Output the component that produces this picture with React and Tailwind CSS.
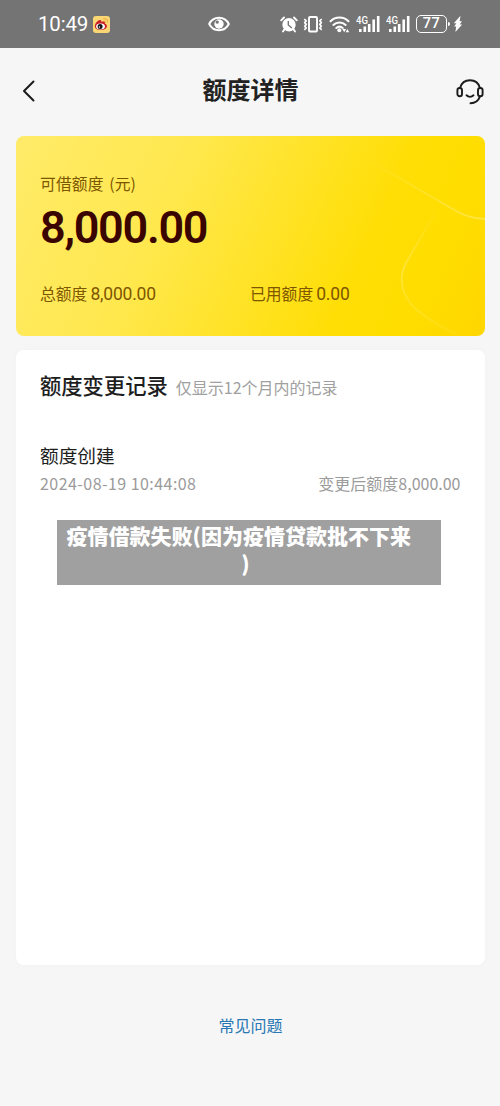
import React from "react";

const cjk = "font-['Noto_Sans_CJK_SC',sans-serif]";
const num = "font-[Roboto,'Noto_Sans_CJK_SC',sans-serif]";

function WeiboIcon() {
  return (
    <svg className="ml-[5px] mt-[1px]" width="17" height="17" viewBox="0 0 17 17">
      <rect width="17" height="17" rx="3" fill="#fbd774" />
      <path d="M10.800 2.600c2.400-.3 4 1.200 3.700 3.500M10.900 5c1-.1 1.600.4 1.500 1.300" fill="none" stroke="#f5b04a" strokeWidth="1.200" strokeLinecap="round" />
      <path d="M1.800 10.300C2 7 6.200 2.800 8 4.400c.6.600.3 1.400.3 1.400s3.300-1.200 3.600.6c.1.700-.1 1.100-.1 1.100 1.400.4 2.100 1.300 2.100 2.500 0 2.500-3 4.100-6.200 4.100s-6-1.400-5.900-3.800z" fill="#c9202a" />
      <ellipse cx="7.500" cy="10.500" rx="4.400" ry="3" fill="#fff" />
      <circle cx="7.100" cy="10.500" r="2.500" fill="#151515" />
      <circle cx="6.400" cy="11" r=".7" fill="#fff" />
    </svg>
  );
}

function EyeIcon() {
  return (
    <svg width="22" height="16" viewBox="0 0 22 16">
      <path d="M1.200 8C5.300-.2 16.700-.2 20.800 8 16.700 16.200 5.300 16.200 1.200 8z" fill="none" stroke="#fff" strokeWidth="2" />
      <circle cx="11" cy="8" r="4.700" fill="#fff" />
      <circle cx="9.200" cy="6.100" r="1.700" fill="#747474" />
    </svg>
  );
}

function AlarmIcon() {
  return (
    <svg width="18" height="17" viewBox="0 0 18 17">
      <circle cx="9" cy="8.700" r="6.700" fill="#fff" />
      <path d="M1.200 4.300 4 1.500M16.800 4.300 14 1.500" stroke="#fff" strokeWidth="1.900" strokeLinecap="round" />
      <path d="M4.300 13.500 3 15.500M13.700 13.500l1.300 2" stroke="#fff" strokeWidth="1.900" strokeLinecap="round" />
      <path d="M8.300 5v4l3.500 3" fill="none" stroke="#747474" strokeWidth="1.400" />
    </svg>
  );
}

function VibrateIcon() {
  return (
    <svg width="20" height="17" viewBox="0 0 20 17">
      <rect x="6" y="1" width="8" height="14.500" rx="1" fill="none" stroke="#fff" strokeWidth="1.900" />
      <path d="M1.300 3l1.900 1.800-1.500 1.800 1.500 1.800-1.500 1.800 1.500 1.800-1.900 1.800M18.700 3l-1.900 1.800 1.500 1.800-1.500 1.800 1.500 1.800-1.500 1.800 1.900 1.800" fill="none" stroke="#fff" strokeWidth="1.700" strokeLinejoin="round" />
    </svg>
  );
}

function WifiIcon() {
  return (
    <svg width="22" height="17" viewBox="0 0 22 17">
      <g fill="none" stroke="#fff" strokeWidth="2" strokeLinecap="round">
        <path d="M1.500 5.300c5-5 13-5 18 0" />
        <path d="M4.300 8.900c3.500-3.300 8.900-3.300 12.400 0" />
        <path d="M7.300 12c2-1.700 4.400-1.700 6.400 0" />
      </g>
      <circle cx="10.300" cy="14.300" r="2" fill="#fff" />
      <path d="M13.300 13l1.900 3.300 1.900-3.300zM16.600 16.300l1.800-3.300 1.800 3.300z" fill="#fff" />
    </svg>
  );
}

function SignalIcon() {
  return (
    <svg width="25" height="18" viewBox="0 0 25 18">
      <text x="0" y="8.500" fontSize="10" fontWeight="500" fill="#fff" fontFamily="Roboto, sans-serif" textLength="12" lengthAdjust="spacingAndGlyphs">4G</text>
      <path d="M4.300 14V17M8.800 11.500V17M13.200 9V17M17.700 4.500V17M22.200 1V17" stroke="#fff" strokeWidth="2.600" />
    </svg>
  );
}

function StatusBar() {
  return (
    <div className="flex h-12 items-center bg-[#747474] pl-[38px] text-white">
      <div className="flex w-[170px] items-center">
        <span className="w-[50px] whitespace-nowrap font-[Roboto,sans-serif] text-[20.500px] leading-6 tracking-[-0.200px]">10:49</span>
        <WeiboIcon />
      </div>
      <EyeIcon />
      <div className="ml-[50px] flex items-center">
        <AlarmIcon />
        <div className="ml-[5px]"><VibrateIcon /></div>
        <div className="ml-[6px]"><WifiIcon /></div>
        <div className="ml-[5px] flex gap-[5px]">
          <SignalIcon />
          <SignalIcon />
        </div>
        <div className="ml-[5px] flex h-[18px] w-[31px] items-center justify-center rounded-[5px] border-[1.500px] border-white font-[Roboto,sans-serif] text-[14.500px] font-medium leading-none tracking-[0.500px]">77</div>
        <div className="ml-px h-1 w-0.5 rounded-r bg-white" />
        <svg className="ml-[3px]" width="10" height="18" viewBox="0 0 10 18">
          <path d="M7.500.8.800 8.200h2.600L1.200 11.600h2L2.400 17 9.200 9.600H6.700L9 6.300H6.600z" fill="#fff" />
        </svg>
      </div>
    </div>
  );
}

function Header() {
  return (
    <header className="flex h-[88px] items-center justify-between pb-[3px] pl-[22px] pr-[16px]">
      <svg width="28" height="22" viewBox="0 0 28 22">
        <path d="M11.500 1.500 2 11l9.500 9.500" fill="none" stroke="#1c1c1c" strokeWidth="2" strokeLinecap="round" strokeLinejoin="round" />
      </svg>
      <h1 className="mb-[3px] mr-[5px] text-[24px] font-bold leading-8 text-[#222]">额度详情</h1>
      <svg className="mt-[3px]" width="28" height="26" viewBox="0 0 28 26">
        <g fill="none" stroke="#1c1c1c" strokeWidth="1.900" strokeLinecap="round">
          <path d="M4 9C5.500 3.800 9.300 1.300 14 1.300S22.500 3.800 24 9" />
          <rect x="1.400" y="9" width="4.600" height="8.200" rx="2.300" />
          <rect x="22" y="9" width="4.600" height="8.200" rx="2.300" />
          <path d="M24 17.400c-1.500 4.200-4.800 6.800-9.500 6.800" />
          <path d="M10.500 16.300c2 1.900 5 1.900 7 0" />
        </g>
      </svg>
    </header>
  );
}

function QuotaCard() {
  return (
    <section className="relative mx-auto h-[200px] w-[469px] overflow-hidden rounded-[8px] bg-[linear-gradient(115deg,#ffeb69_0%,#ffe84e_32%,#ffe223_56%,#ffde05_72%,#ffdd00_86%,#ffd600_100%)] pl-[24.500px] pt-9 text-[#7e5600]">
      <svg className="absolute inset-0" width="469" height="200" viewBox="0 0 469 200">
        <defs>
          <linearGradient id="edgeA" gradientUnits="userSpaceOnUse" x1="345" y1="20" x2="469" y2="84">
            <stop offset="0" stopColor="#ffe750" stopOpacity="0" />
            <stop offset="1" stopColor="#ffe750" stopOpacity=".85" />
          </linearGradient>
          <linearGradient id="edgeB" gradientUnits="userSpaceOnUse" x1="0" y1="70" x2="0" y2="200">
            <stop offset="0" stopColor="#ffe750" stopOpacity="0" />
            <stop offset=".5" stopColor="#ffe750" stopOpacity=".7" />
            <stop offset="1" stopColor="#ffe750" stopOpacity=".15" />
          </linearGradient>
        </defs>
        <path d="M345 20 435 72Q452 83 469 83" fill="none" stroke="url(#edgeA)" strokeWidth="1.800" />
        <path d="M422 72 390 127C382 142 385 160 401 174Q418 188 442 199" fill="none" stroke="url(#edgeB)" strokeWidth="1.800" />
      </svg>
      <div className="relative">
        <p className="text-[15.800px] leading-6 tracking-[0.100px] [word-spacing:2px]">可借额度 (元)</p>
        <p className={`${num} mt-[7px] text-[45px] font-semibold leading-[50px] tracking-[-1.300px] text-[#3a0500]`}>8,000.00</p>
        <div className="mt-[29px] flex leading-6">
          <p className="flex w-[210px] text-[15.800px]">总额度<span className={`${num} ml-[3px] text-[17.500px] tracking-[-0.200px]`}>8,000.00</span></p>
          <p className="flex text-[15.800px]">已用额度<span className={`${num} ml-[3px] text-[17.500px] tracking-[-0.200px]`}>0.00</span></p>
        </div>
      </div>
    </section>
  );
}

function Records() {
  return (
    <section className="relative mx-auto mt-[14px] h-[615px] w-[469px] rounded-[8px] bg-white pl-[24.500px] pr-6 pt-[19px] shadow-[0_0_8px_rgba(0,0,0,0.02)]">
      <div className="flex items-center">
        <h2 className="text-[21.300px] font-medium leading-8 text-[#1e1e1e]">额度变更记录</h2>
        <span className="ml-2 mt-[3px] text-[16px] leading-6 text-[#a0a0a0]">仅显示12个月内的记录</span>
      </div>
      <div className="mt-[40px]">
        <p className="text-[18.700px] leading-7 text-[#1e1e1e]">额度创建</p>
        <div className="mt-[2px] flex justify-between text-[16px] leading-6 text-[#9b9b9b]">
          <span className="tracking-[0.450px]">2024-08-19 10:44:08</span>
          <span>变更后额度8,000.00</span>
        </div>
      </div>
      <div className="absolute left-[41px] top-[170px] h-[65px] w-[384px] bg-[#a0a0a0] pl-[10px] pt-px text-[21px] font-black leading-7 text-white">
        <p className="whitespace-nowrap">疫情借款失败(因为疫情贷款批不下来</p>
        <p className="pr-[16px] text-center">)</p>
      </div>
    </section>
  );
}

export default function App() {
  return (
    <main className={`${cjk} h-[1106px] w-[500px] bg-[#f6f6f6]`}>
      <StatusBar />
      <Header />
      <QuotaCard />
      <Records />
      <a className="mt-[48px] block pl-px text-center text-[16px] leading-6 text-[#2878b4]">常见问题</a>
    </main>
  );
}
